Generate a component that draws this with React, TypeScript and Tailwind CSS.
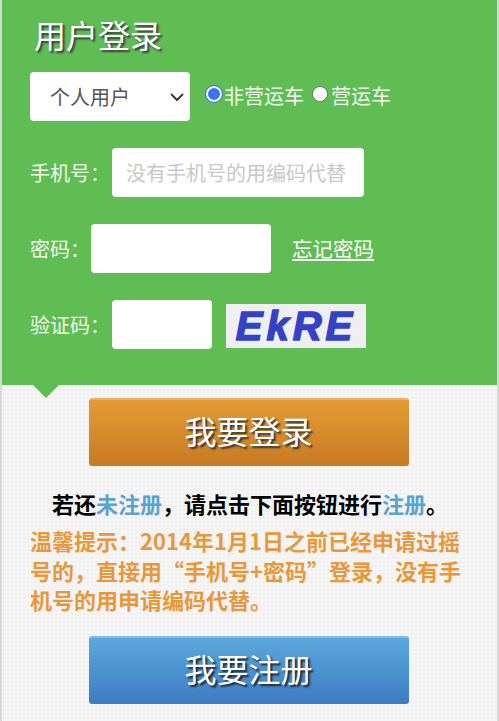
// 用户登录 — mobile login page
const font = "font-['Noto_Sans_CJK_SC','Liberation_Sans',sans-serif]";

export default function App() {
  return (
    <div className={`${font} w-[499px] h-[721px] overflow-hidden bg-[#f5f5f5] bg-[radial-gradient(#eeeeee_1px,transparent_1px)] bg-[length:4px_4px] border-x-2 border-x-[#d8d8d8]`}>
      {/* green login panel */}
      <div className="relative h-[385px] bg-[#5fbd54] pl-[28px] pt-[12px] text-[#f2fbee] text-[20px]">
        <h1 className="pl-[4px] h-[44px] text-[32px] leading-[44px] text-white [text-shadow:2px_2px_2px_#3a3a3a]">用户登录</h1>

        <div className="mt-[16px] flex items-center h-[49px]">
          <div className="w-[160px] h-[49px] bg-white rounded-[4px] flex items-center pl-[20px] pr-[5px] justify-between text-[#555] text-[20px]">
            <span>个人用户</span>
            <svg width="16" height="16" viewBox="0 0 16 16" fill="none" stroke="#333" strokeWidth="1.8" strokeLinecap="round" strokeLinejoin="round">
              <path d="M2.5 5.5 8 11l5.5-5.5" />
            </svg>
          </div>
          <div className="ml-[16px] flex items-center -mt-[2px]">
            <span className="w-[16px] h-[16px] rounded-full bg-[#3b74f0] border-[2px] border-white outline outline-[1px] outline-[#3b74f0] mr-[2px] -mt-[3px]"></span>
            <span>非营运车</span>
            <span className="ml-[8px] w-[16px] h-[16px] rounded-full bg-white border border-[#767676] -mt-[3px]"></span>
            <span className="ml-[3px]">营运车</span>
          </div>
        </div>

        <div className="mt-[27px] flex items-center h-[49px]">
          <span className="w-[82px] shrink-0 whitespace-nowrap">手机号：</span>
          <div className="w-[252px] h-[49px] bg-white rounded-[4px] flex items-center pl-[14px] text-[#c8c8c8] text-[20px] whitespace-nowrap">没有手机号的用编码代替</div>
        </div>

        <div className="mt-[27px] flex items-center h-[49px]">
          <span className="w-[61px] shrink-0 whitespace-nowrap">密码：</span>
          <div className="w-[180px] h-[49px] bg-white rounded-[4px]"></div>
          <a className="ml-[21px] underline underline-offset-2 text-white text-[20.5px]">忘记密码</a>
        </div>

        <div className="mt-[27px] flex items-center h-[49px]">
          <span className="w-[82px] shrink-0 whitespace-nowrap">验证码：</span>
          <div className="w-[100px] h-[49px] bg-white rounded-[4px]"></div>
          <div className="ml-[14px] w-[140px] h-[44px] mt-[3px] bg-[#efeff3] flex items-center justify-center overflow-hidden">
            <span className="font-['Liberation_Sans',sans-serif] font-bold italic text-[#3442c4] text-[40px] leading-[44px] tracking-[4px] [-webkit-text-stroke:1.5px_#3442c4]">EkRE</span>
          </div>
        </div>

        {/* pointer under the panel */}
        <div className="absolute left-[31px] top-[385px] w-0 h-0 border-x-[13px] border-x-transparent border-t-[13px] border-t-[#5fbd54]"></div>
      </div>

      <div className="pt-[13px] flex flex-col items-stretch">
        <button className="mx-auto -translate-x-[1px] block w-[320px] h-[68px] rounded-[3px] border-t-2 border-t-[#e4b36b] bg-gradient-to-b from-[#e39c34] to-[#c87a24] text-white text-[32px] leading-[58px] pb-[6px] [text-shadow:2px_2px_2px_#333]">我要登录</button>

        <p className="mt-[22px] pl-[50px] h-[30px] text-[22px] leading-[30px] font-bold text-black whitespace-nowrap">
          若还<span className="text-[#5aa3cf]">未注册</span>，请点击下面按钮进行<span className="text-[#5aa3cf]">注册</span>。
        </p>

        <p className="mt-[8px] pl-[28px] pr-[28px] text-[22px] leading-[29.5px] font-bold text-[#e8983a]">
          温馨提示：2014年1月1日之前已经申请过摇号的，直接用“手机号+密码”登录，没有手机号的用申请编码代替。
        </p>

        <button className="mx-auto mt-[21px] -translate-x-[1px] block w-[320px] h-[68px] rounded-[3px] border-t-2 border-t-[#7dbde6] bg-gradient-to-b from-[#5aa8dc] to-[#3d7cc4] text-white text-[32px] leading-[58px] pb-[6px] [text-shadow:2px_2px_2px_#222]">我要注册</button>
      </div>
    </div>
  );
}
